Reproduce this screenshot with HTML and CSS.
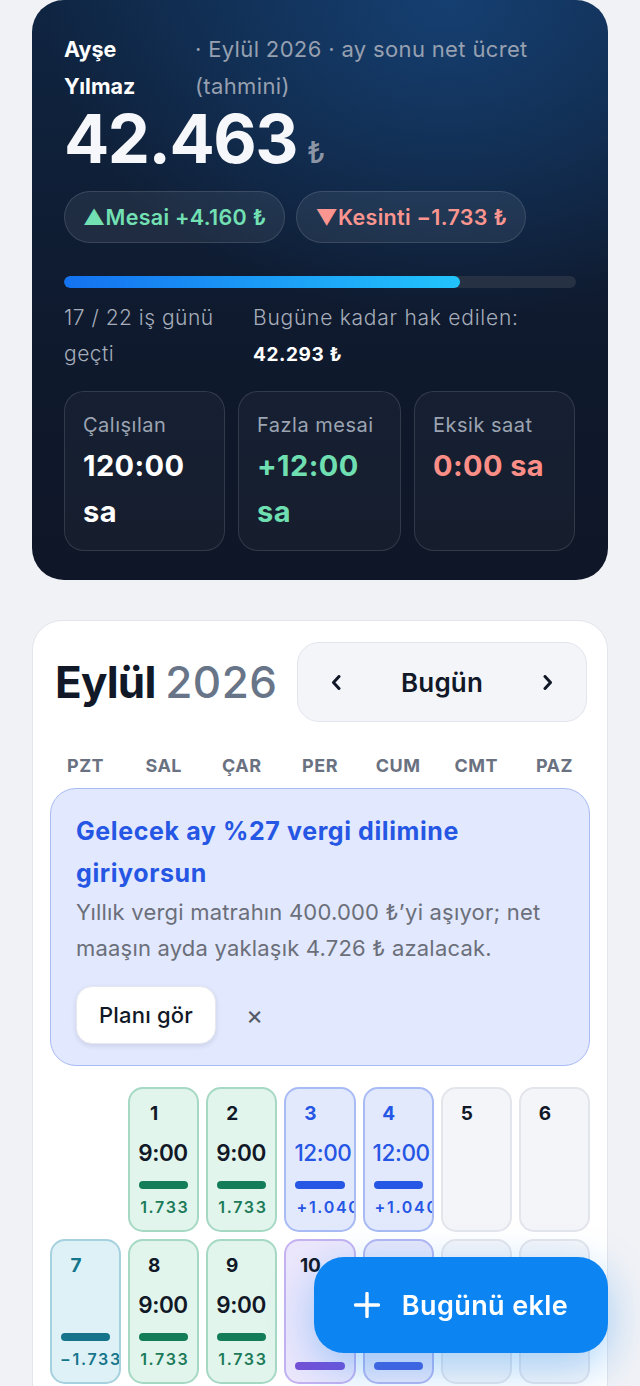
FILE: index.html
```html
<!DOCTYPE html>
<html lang="tr">
<head>
<meta charset="utf-8">
<title>Maaş</title>
<link rel="stylesheet" href="styles.css">
</head>
<body>
<main class="page">
  <section class="hero">
    <div class="hero-head">
      <div class="name">Ayşe Yılmaz</div>
      <div class="sub">· Eylül 2026 · ay sonu net ücret (tahmini)</div>
    </div>
    <div class="amount"><span class="num">42.463</span><span class="cur">₺</span></div>
    <div class="chips">
      <span class="chip up">▲Mesai +4.160 ₺</span>
      <span class="chip down">▼Kesinti −1.733 ₺</span>
    </div>
    <div class="bar"><div class="fill" style="width:77.27%"></div></div>
    <div class="progress-row">
      <div class="days">17 / 22 iş günü geçti</div>
      <div class="earned">Bugüne kadar hak edilen:<br><b>42.293 ₺</b></div>
    </div>
    <div class="stats">
      <div class="stat"><div class="label">Çalışılan</div><div class="val">120:00 sa</div></div>
      <div class="stat"><div class="label">Fazla mesai</div><div class="val green">+12:00 sa</div></div>
      <div class="stat"><div class="label">Eksik saat</div><div class="val red">0:00 sa</div></div>
    </div>
  </section>

  <section class="cal">
    <div class="cal-head">
      <h1 class="month">Eylül <span>2026</span></h1>
      <div class="nav">
        <svg class="arrow" width="10" height="15" viewBox="0 0 10 15" aria-label="Önceki"><path d="M8 1.5 2.5 7.5 8 13.5" stroke="#111827" stroke-width="3" fill="none" stroke-linecap="round" stroke-linejoin="round"/></svg>
        <span class="today">Bugün</span>
        <svg class="arrow" width="10" height="15" viewBox="0 0 10 15" aria-label="Sonraki"><path d="M2 1.5 7.5 7.5 2 13.5" stroke="#111827" stroke-width="3" fill="none" stroke-linecap="round" stroke-linejoin="round"/></svg>
      </div>
    </div>
    <div class="weekdays">
      <span>PZT</span><span>SAL</span><span>ÇAR</span><span>PER</span><span>CUM</span><span>CMT</span><span>PAZ</span>
    </div>
    <div class="notice">
      <div class="n-title">Gelecek ay %27 vergi dilimine giriyorsun</div>
      <div class="n-text">Yıllık vergi matrahın 400.000 ₺’yi aşıyor; net maaşın ayda yaklaşık 4.726 ₺ azalacak.</div>
      <div class="n-actions">
        <button class="plan">Planı gör</button>
        <span class="close">×</span>
      </div>
    </div>
    <div class="grid">
      <div class="blank"></div>
      <div class="day ok"><span class="d">1</span><span class="h">9:00</span><div class="foot"><i></i><span class="m">1.733</span></div></div>
      <div class="day ok"><span class="d">2</span><span class="h">9:00</span><div class="foot"><i></i><span class="m">1.733</span></div></div>
      <div class="day ot"><span class="d">3</span><span class="h">12:00</span><div class="foot"><i></i><span class="m">+1.040</span></div></div>
      <div class="day ot"><span class="d">4</span><span class="h">12:00</span><div class="foot"><i></i><span class="m">+1.040</span></div></div>
      <div class="day off"><span class="d">5</span></div>
      <div class="day off"><span class="d">6</span></div>

      <div class="day miss"><span class="d">7</span><div class="foot"><i></i><span class="m">−1.733</span></div></div>
      <div class="day ok"><span class="d">8</span><span class="h">9:00</span><div class="foot"><i></i><span class="m">1.733</span></div></div>
      <div class="day ok"><span class="d">9</span><span class="h">9:00</span><div class="foot"><i></i><span class="m">1.733</span></div></div>
      <div class="day leave"><span class="d">10</span><div class="foot"><i></i></div></div>
      <div class="day trip"><span class="d">11</span><div class="foot"><i></i></div></div>
      <div class="day off"><span class="d">12</span></div>
      <div class="day off"><span class="d">13</span></div>

      <div class="day ok"><span class="d">14</span><span class="h">9:00</span><div class="foot"><i></i><span class="m">1.733</span></div></div>
      <div class="day ok"><span class="d">15</span><span class="h">9:00</span><div class="foot"><i></i><span class="m">1.733</span></div></div>
      <div class="day ok"><span class="d">16</span><span class="h">9:00</span><div class="foot"><i></i><span class="m">1.733</span></div></div>
      <div class="day ok"><span class="d">17</span><span class="h">9:00</span><div class="foot"><i></i><span class="m">1.733</span></div></div>
      <div class="day ok"><span class="d">18</span><span class="h">9:00</span><div class="foot"><i></i><span class="m">1.733</span></div></div>
      <div class="day off"><span class="d">19</span></div>
      <div class="day off"><span class="d">20</span></div>
    </div>
  </section>
</main>
<button class="fab">
  <svg width="26" height="26" viewBox="0 0 26 26" aria-hidden="true"><path d="M13 1.5v23M1.5 13h23" stroke="#fff" stroke-width="3.4" stroke-linecap="round" fill="none"/></svg>
  <span>Bugünü ekle</span>
</button>
</body>
</html>
```

FILE: styles.css
```css
* { box-sizing: border-box; }
html, body { margin: 0; padding: 0; }
body {
  background: #f1f2f6;
  font-family: Inter, "Noto Sans", "DejaVu Sans", sans-serif;
  color: #111827;
}
.page {
  padding: 0 32px 40px;
  display: flex;
  flex-direction: column;
  gap: 40px;
}

/* hero */
.hero {
  border-radius: 32px;
  padding: 31px 32px 29px;
  color: #fff;
  background:
    radial-gradient(ellipse 70% 55% at 72% 0%, rgba(22, 66, 118, 0.9) 0%, rgba(22, 66, 118, 0) 100%),
    linear-gradient(180deg, #0f2542 0%, #0f1a2e 55%, #0f1627 100%);
}
.hero-head {
  display: flex;
  gap: 22px;
  align-items: flex-start;
}
.name {
  flex: 0 0 109px;
  font-size: 21.5px;
  font-weight: 700;
  line-height: 37px;
}
.sub {
  font-size: 22px;
  line-height: 37px;
  color: #97a0b0;
  letter-spacing: 0.35px;
}
.amount {
  display: flex;
  align-items: baseline;
  gap: 10px;
  margin-top: -6px;
}
.num {
  font-size: 67px;
  font-weight: 700;
  letter-spacing: -1.5px;
  line-height: 80px;
  color: #f6f7fa;
}
.cur {
  font-size: 30px;
  color: #8b95a6;
  font-weight: 500;
}
.chips {
  display: flex;
  gap: 11px;
  margin-top: 12px;
}
.chip {
  height: 52px;
  display: inline-flex;
  align-items: center;
  padding: 0 18px;
  border-radius: 26px;
  background: rgba(255, 255, 255, 0.07);
  border: 1.5px solid rgba(255, 255, 255, 0.12);
  font-size: 21.5px;
  font-weight: 600;
  letter-spacing: 0.3px;
}
.chip.up { color: #72e0b3; }
.chip.down { color: #fb958f; }

.bar {
  margin-top: 33px;
  height: 12px;
  border-radius: 6px;
  background: #263244;
  overflow: hidden;
}
.fill {
  height: 100%;
  border-radius: 6px;
  background: linear-gradient(90deg, #1472f0, #22c4fc);
}
.progress-row {
  display: flex;
  gap: 20px;
  margin-top: 12px;
}
.days {
  flex: 0 0 169px;
  font-size: 21px;
  font-weight: 300;
  line-height: 36px;
  color: #a6adba;
  letter-spacing: 0.5px;
}
.earned {
  font-size: 21px;
  font-weight: 300;
  line-height: 36px;
  color: #a6adba;
  letter-spacing: 0.75px;
}
.earned b {
  font-size: 19px;
  font-weight: 700;
  color: #fff;
  letter-spacing: 0.6px;
}
.stats {
  display: grid;
  grid-template-columns: 161px 163px 161px;
  gap: 13px;
  margin-top: 18px;
}
.stat {
  height: 160px;
  border-radius: 20px;
  background: rgba(255, 255, 255, 0.03);
  border: 1.5px solid rgba(255, 255, 255, 0.12);
  padding: 19px 18px;
}
.label {
  font-size: 20px;
  color: #9ca4b2;
  line-height: 28px;
  letter-spacing: 0.5px;
}
.val {
  font-size: 29px;
  font-weight: 700;
  line-height: 46px;
  margin-top: 4px;
  color: #fff;
  letter-spacing: 0.4px;
}
.val.green { color: #6fdfb2; }
.val.red { color: #fb8e87; }

/* calendar */
.cal {
  background: #fff;
  border: 1.5px solid #e3e5ec;
  border-radius: 30px;
  padding: 21px 17px 30px;
}
.cal-head {
  display: flex;
  align-items: center;
  justify-content: space-between;
  padding: 0 3px 0 5px;
}
.month {
  margin: 0;
  font-size: 44px;
  font-weight: 700;
  letter-spacing: -0.8px;
  color: #111827;
}
.month span {
  font-weight: 500;
  color: #687588;
  letter-spacing: 0.5px;
}
.nav {
  width: 290px;
  height: 80px;
  border-radius: 22px;
  background: #f4f5f9;
  border: 1.5px solid #e2e5ec;
  display: flex;
  align-items: center;
  justify-content: space-between;
  padding: 0 33px 0 33px;
}
.arrow {
  display: block;
}
.today {
  font-size: 26px;
  font-weight: 600;
  color: #111827;
  letter-spacing: 0.2px;
}
.weekdays {
  display: grid;
  grid-template-columns: repeat(7, 1fr);
  gap: 7px;
  margin-top: 33px;
  text-align: center;
  font-size: 18px;
  font-weight: 700;
  color: #6a7282;
  letter-spacing: 0.5px;
}
.notice {
  margin-top: 12px;
  background: #e2e8fd;
  border: 1.5px solid #a8bbf4;
  border-radius: 26px;
  padding: 21px 25px 21px;
}
.n-title {
  font-size: 25px;
  font-weight: 700;
  color: #2556e4;
  line-height: 42px;
  letter-spacing: 0.6px;
}
.n-text {
  font-size: 22px;
  line-height: 36px;
  color: #6b6f7a;
  letter-spacing: 0.2px;
}
.n-actions {
  display: flex;
  align-items: center;
  gap: 30px;
  margin-top: 20px;
}
.plan {
  font: inherit;
  font-size: 22px;
  font-weight: 500;
  color: #111827;
  background: #fff;
  border: 1.5px solid #e6e8ee;
  border-radius: 16px;
  height: 58px;
  padding: 0 22px;
  letter-spacing: 0.2px;
  box-shadow: 0 2px 5px rgba(30, 40, 80, 0.12);
}
.close {
  font-size: 26px;
  color: #555a66;
  margin-top: -2px;
}
.grid {
  display: grid;
  grid-template-columns: repeat(7, 1fr);
  gap: 7px;
  margin-top: 21px;
}
.day {
  height: 145px;
  border-radius: 15px;
  border: 2px solid #e3e5ec;
  background: #f4f5f9;
  padding: 12px 8px 12px;
  display: flex;
  flex-direction: column;
  overflow: hidden;
}
.d {
  width: 32px;
  text-align: center;
  font-size: 19px;
  font-weight: 700;
  line-height: 26px;
  color: #111827;
}
.h {
  margin-top: 11px;
  font-size: 22.5px;
  font-weight: 600;
  line-height: 30px;
  color: #111827;
  letter-spacing: -0.4px;
  white-space: nowrap;
}
.foot {
  margin-top: auto;
  display: flex;
  flex-direction: column;
}
.foot i {
  display: block;
  height: 8px;
  margin: 0 1px;
  border-radius: 4px;
  background: #127d58;
}
.m {
  margin-top: 7px;
  font-size: 16px;
  font-weight: 600;
  line-height: 22px;
  letter-spacing: 1.7px;
  white-space: nowrap;
  padding-left: 2px;
}
.ok { background: #e1f5ec; border-color: #a6d9c4; }
.ok .m { color: #1c7a59; }
.ot { background: #e3e9fd; border-color: #a8bbf4; }
.ot .d, .ot .h, .ot .m { color: #2556e4; }
.ot .h { font-weight: 500; }
.ot .foot i { background: #2556e4; }
.miss { background: #def1f6; border-color: #a6d1de; }
.miss .d, .miss .m { color: #15758b; }
.miss .m { padding-left: 0; }
.miss .foot i { background: #15748a; }
.leave { background: #ece7fc; border-color: #c5b3f1; }
.leave .foot i { background: #7650d6; }
.trip { background: #e6e7fb; border-color: #b3b7f1; }
.trip .foot i { background: #4a5fde; }

.fab {
  position: fixed;
  right: 32px;
  bottom: 33px;
  width: 294px;
  height: 96px;
  border: 0;
  border-radius: 30px;
  background: #0c84f2;
  color: #fff;
  display: flex;
  align-items: center;
  justify-content: center;
  gap: 22px;
  font: inherit;
  font-size: 27px;
  font-weight: 600;
  letter-spacing: 0.4px;
  box-shadow: 0 14px 44px rgba(12, 132, 242, 0.35);
}
```
